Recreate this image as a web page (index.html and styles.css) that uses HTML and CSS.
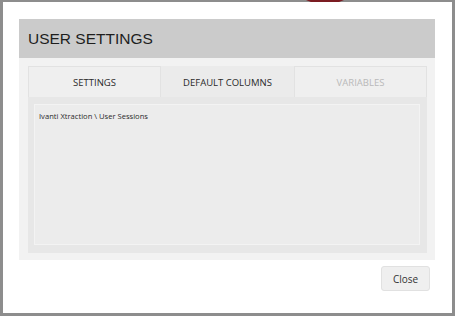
FILE: index.html
```html
<!DOCTYPE html>
<html lang="en">
<head>
  <meta charset="UTF-8"/>
  <title>User Settings</title>
  <link rel="stylesheet" href="styles.css">
</head>
<body>
  <div class="backdrop-blob"></div>

  <!-- Modal -->
  <div class="modal">
    <div class="modal-head">
      <h1>USER SETTINGS</h1>
    </div>
    <div class="modal-body">
      <div class="tabs">
        <div class="tab">SETTINGS</div>
        <div class="tab active">DEFAULT COLUMNS</div>
        <div class="tab disabled">VARIABLES</div>
      </div>
      <div class="tab-pane">
        <div class="tree">Ivanti Xtraction \ User Sessions</div>
      </div>
    </div>
    <div class="modal-foot">
      <button class="btn">Close</button>
    </div>
  </div>
</body>
</html>
```
FILE: styles.css
```css
* { box-sizing: border-box; margin: 0; }
html, body { height: 100%; }
body {
  background: #8d8d8d;
  font-family: "Open Sans", "Noto Sans", sans-serif;
  color: #222;
  padding: 2px 3px 3px 3px;
  position: relative;
  overflow: hidden;
}

/* bit of the page behind the dialog */
.backdrop-blob {
  position: absolute;
  top: -40px; left: 292px;
  width: 66px; height: 44px;
  border-radius: 50%;
  background: #7b1c22;
}

/* Modal */
.modal {
  position: relative;
  width: 449px; height: 311px;
  background: #fff;
  padding: 17px 17px 0 16px;
  display: flex; flex-direction: column;
}
.modal-head {
  background: #cbcbcb;
  height: 39px;
  padding: 0 9px;
  display: flex; align-items: center;
}
.modal-head h1 {
  font-family: "Liberation Sans", Arial, sans-serif;
  font-weight: normal;
  font-size: 15.5px;
  color: #1e1e1e;
  padding-top: 1px;
}
.modal-body {
  background: #f2f2f2;
  padding: 8px 8px 7px 9px;
  height: 202px;
  display: flex; flex-direction: column;
}

/* Tabs */
.tabs {
  display: flex;
  height: 31px;
}
.tab {
  flex: 1;
  display: flex; align-items: center; justify-content: center;
  font-size: 9.5px;
  color: #2a2a2a;
  background: #efefef;
  border: 1px solid #e2e2e2;
  border-bottom: none;
}
.tab.active {
  background: #ebebeb;
  border-color: #ebebeb;
}
.tab.disabled { color: #b9b9b9; }

.tab-pane {
  flex: 1;
  background: #e7e7e7;
  padding: 7px 7px 8px 6px;
  display: flex;
}
.tree {
  flex: 1;
  background: #ececec;
  border: 1px solid #f3f3f3;
  padding: 6px 4px;
  font-size: 7.6px;
  color: #2a2a2a;
}

/* Footer */
.modal-foot {
  display: flex; justify-content: flex-end;
  padding: 6px 5px 0 0;
}
.btn {
  width: 49px; height: 25px;
  background: #efefef;
  border: 1px solid #e1e1e1;
  border-radius: 3px;
  font-family: "Open Sans", "Noto Sans", sans-serif;
  font-size: 10px;
  color: #333;
}
```
